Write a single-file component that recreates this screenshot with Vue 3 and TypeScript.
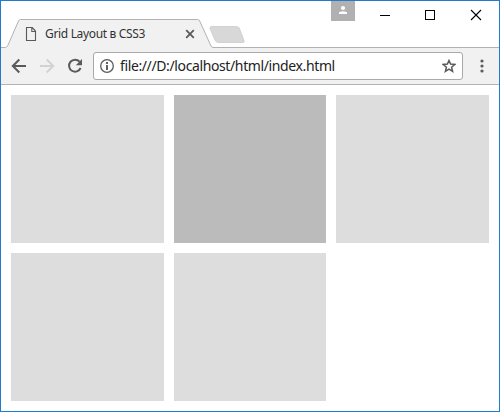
<script setup lang="ts">
interface Cell {
  id: number
  active: boolean
}

const title: string = 'Grid Layout в CSS3'
const address: string = 'file:///D:/localhost/html/index.html'
const cells: Cell[] = [1, 2, 3, 4, 5].map((id) => ({ id, active: id === 2 }))
</script>

<template>
  <div class="window">
    <header class="titlebar">
      <svg class="tab-shape" width="498" height="47" viewBox="1 1 498 47">
        <path d="M7 48 L19 20 Q19.3 19.5 20 19.5 H198 Q199 19.5 199.4 20.5 L211 47 L213 48Z" fill="#f1f1f1" />
        <path
          d="M1 47.5 H5.5 Q7 47.5 7.8 45.5 L18.5 21 Q19.2 19.5 20.5 19.5 H197.5 Q199 19.5 199.7 21 L211 46 Q211.7 47.5 213 47.5 H499"
          fill="none"
          stroke="#b1b1b1"
        />
        <path
          d="M212 26.5 H236.5 Q238.5 26.5 239.3 28 L244 40.5 Q244.7 42.5 243 42.5 H218.5 Q216.2 42.5 215.2 40.5 L210 28.5 Q209.3 26.5 212 26.5Z"
          fill="#d8d8d8"
          stroke="#cbcbcb"
          stroke-width=".8"
        />
      </svg>
      <div class="tab">
        <svg class="page-icon" width="12" height="14" viewBox="0 0 12 14">
          <path d="M1.5.5H7.2L10.5 4V13.5H1.5Z M6.8.7V4.5H10.5" fill="none" stroke="#5a5a5a" stroke-width="1.1" />
        </svg>
        <span class="tab-title">{{ title }}</span>
        <svg width="10" height="10" viewBox="0 0 10 10">
          <path d="M1.2 1.2 8.8 8.8M8.8 1.2 1.2 8.8" stroke="#5a5a5a" stroke-width="1.8" />
        </svg>
      </div>
      <div class="controls">
        <div class="profile">
          <svg width="24" height="20" viewBox="0 0 24 20">
            <circle cx="12" cy="7" r="2.1" fill="#fff" />
            <path d="M8 13V11.8Q8.4 10.3 12 10.3T16 11.8V13Z" fill="#fff" />
          </svg>
        </div>
        <svg class="buttons" width="144" height="28" viewBox="355 1 144 28">
          <g fill="none" stroke="#000">
            <path d="M380 15.5H390" />
            <rect x="425.5" y="10.5" width="9" height="9" />
            <path d="M471 10 481 20M481 10 471 20" stroke-width="1.1" />
          </g>
        </svg>
      </div>
    </header>

    <nav class="toolbar">
      <svg class="nav-icons" width="92" height="36" viewBox="1 48 92 36">
        <path d="M26 66H13M19.3 59.5 12.8 66 19.3 72.5" fill="none" stroke="#5a5a5a" stroke-width="2" />
        <path d="M40 66H53M46.7 59.5 53.2 66 46.7 72.5" fill="none" stroke="#d2d2d2" stroke-width="2" />
        <path d="M79.6 61.7A6 6 0 1 0 80.6 68" fill="none" stroke="#5a5a5a" stroke-width="2" />
        <path d="M82 59V65.2H75.8Z" fill="#5a5a5a" />
      </svg>
      <div class="address">
        <svg width="14" height="14" viewBox="0 0 14 14">
          <circle cx="7" cy="7" r="6.3" fill="none" stroke="#5a5a5a" stroke-width="1.3" />
          <path d="M7 3.1V4.9M7 6.1V10.9" stroke="#5a5a5a" stroke-width="1.9" />
        </svg>
        <span class="url">{{ address }}</span>
        <svg width="14" height="14" viewBox="0 0 14 14">
          <path
            d="M7 1.5 8.6 5.1 12.8 5.5 9.6 8.2 10.6 12.4 7 10.2 3.4 12.4 4.4 8.2 1.2 5.5 5.4 5.1Z"
            fill="none"
            stroke="#5a5a5a"
            stroke-width="1.5"
          />
        </svg>
      </div>
      <svg class="menu" width="4" height="14" viewBox="0 0 4 14">
        <g fill="#5a5a5a">
          <circle cx="2" cy="2" r="1.6" />
          <circle cx="2" cy="7" r="1.6" />
          <circle cx="2" cy="12" r="1.6" />
        </g>
      </svg>
    </nav>

    <main class="grid">
      <div v-for="cell in cells" :key="cell.id" class="cell" :class="{ active: cell.active }"></div>
    </main>
  </div>
</template>

<style scoped>
.window {
  box-sizing: border-box;
  width: 500px;
  height: 412px;
  display: flex;
  flex-direction: column;
  border: 1px solid #1e7dcd;
  background: #fff;
  font-family: "Noto Sans", "Open Sans", sans-serif;
  overflow: hidden;
}
svg {
  display: block;
  flex: none;
}
.titlebar {
  position: relative;
  display: flex;
  justify-content: space-between;
  height: 47px;
}
.tab-shape {
  position: absolute;
  inset: 0;
}
.tab {
  position: relative;
  box-sizing: border-box;
  display: flex;
  align-items: center;
  width: 194px;
  height: 28px;
  margin-top: 19px;
  padding-left: 24px;
}
.page-icon {
  margin-right: 8px;
}
.tab-title {
  flex: 1;
  font-size: 12px;
  line-height: 16px;
  letter-spacing: -0.33px;
  color: #333;
  white-space: nowrap;
}
.controls {
  display: flex;
  align-items: flex-start;
}
.profile {
  width: 24px;
  height: 20px;
  background: #b1b1b1;
}
.toolbar {
  box-sizing: border-box;
  display: flex;
  align-items: center;
  height: 37px;
  background: #f1f1f1;
  border-bottom: 1px solid #b4b4b4;
}
.address {
  box-sizing: border-box;
  display: flex;
  align-items: center;
  width: 370px;
  height: 28px;
  padding: 0 6px;
  border: 1px solid #a9a9a9;
  border-radius: 3px;
  background: #fff;
}
.url {
  flex: 1;
  margin-left: 6px;
  font-size: 14px;
  line-height: 20px;
  letter-spacing: -0.38px;
  color: #222;
  white-space: nowrap;
}
.menu {
  margin-left: 16.5px;
}
.grid {
  flex: 1;
  display: grid;
  grid-template-columns: repeat(3, 1fr);
  grid-template-rows: repeat(2, 148px);
  gap: 10px;
  padding: 10px;
}
.cell {
  background: #ddd;
}
.cell.active {
  background: #bbb;
}
</style>
